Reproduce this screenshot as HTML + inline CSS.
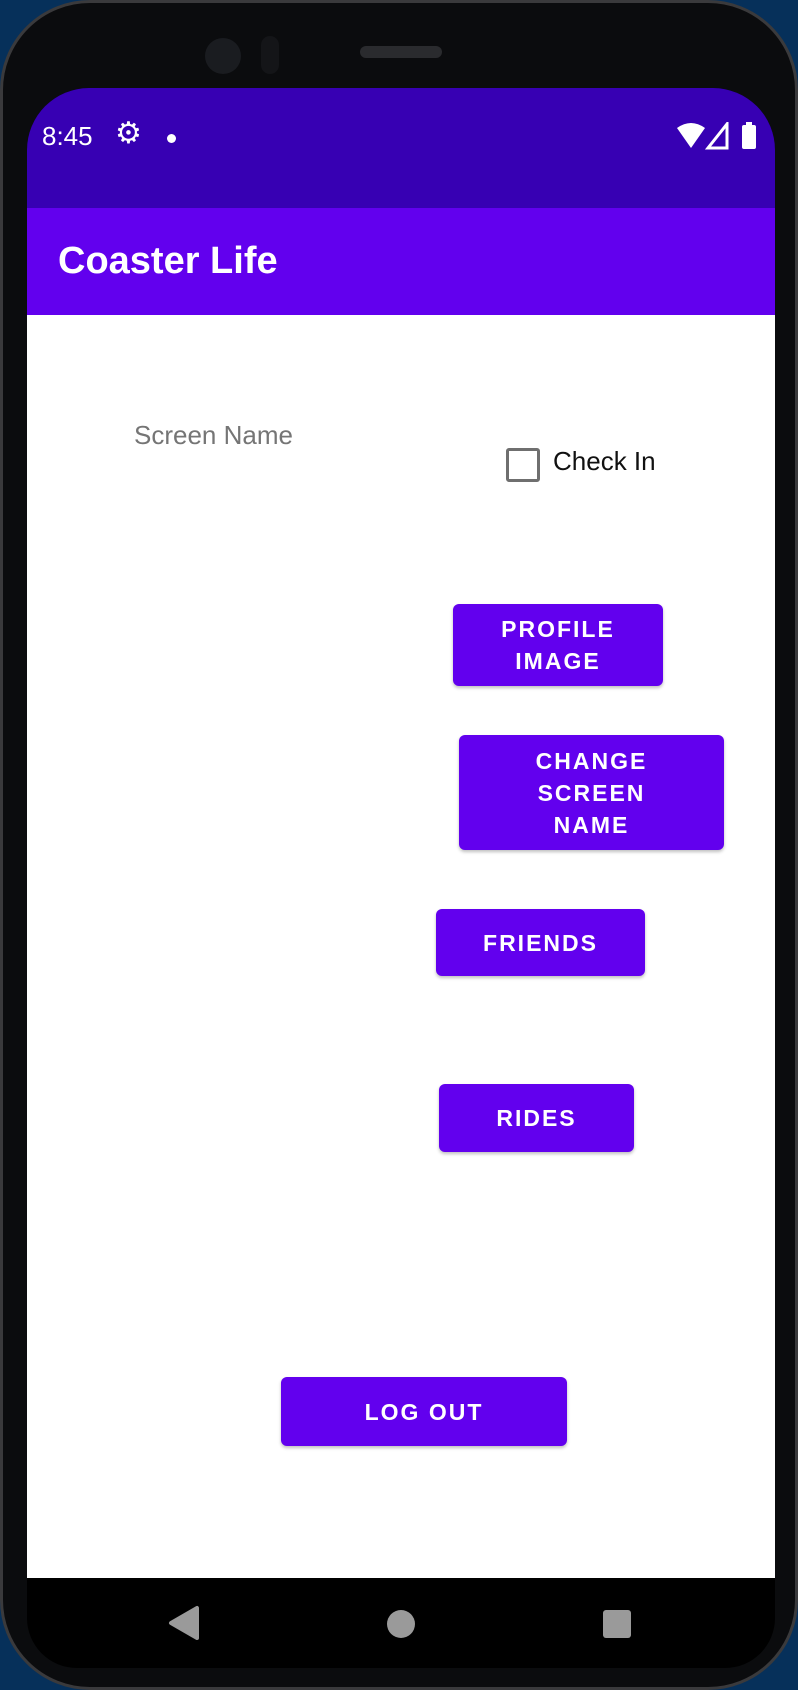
<!DOCTYPE html>
<html><head><style>
body{margin:0;width:798px;height:1679px;background:#06305a;overflow:hidden;font-family:"Liberation Sans",sans-serif;position:relative}
.phone{position:absolute;left:0;top:0;width:798px;height:1690px;background:#0b0c0e;border-radius:90px;border:3px solid #3a3a3c;box-sizing:border-box}
.screen{position:absolute;left:27px;top:88px;width:748px;height:1580px;border-radius:62px 62px 50px 50px;overflow:hidden;background:#000}
.status{position:absolute;left:0;top:0;width:100%;height:120px;background:#3700b3;color:#fff}
.appbar{position:absolute;left:0;top:120px;width:100%;height:107px;background:#6200ee;color:#fff}
.content{position:absolute;left:0;top:227px;width:100%;height:1263px;background:#fff}
.btn{position:absolute;background:#6200ee;color:#fff;border-radius:6px;box-shadow:0 2px 3px rgba(0,0,0,.25);display:flex;align-items:center;justify-content:center;text-align:center;font-size:23px;font-weight:bold;letter-spacing:2px;line-height:32px}
</style></head><body>
<div class="phone"></div>
<div style="position:absolute;left:205px;top:38px;width:36px;height:36px;border-radius:50%;background:#1a1c20"></div>
<div style="position:absolute;left:261px;top:36px;width:18px;height:38px;border-radius:9px;background:#141518"></div>
<div style="position:absolute;left:360px;top:46px;width:82px;height:12px;border-radius:6px;background:#2a2b2e"></div>
<div class="screen">
 <div class="status">
  <div style="position:absolute;left:15px;top:33px;font-size:26px">8:45</div>
  <div style="position:absolute;left:88px;top:28px;font-size:30px">⚙</div>
  <div style="position:absolute;left:140px;top:46px;width:9px;height:9px;border-radius:50%;background:#fff"></div>
  <svg style="position:absolute;left:650px;top:34px" width="90" height="28" viewBox="0 0 90 28">
   <path d="M0 6 Q14 -4 28 6 L14 26 Z" fill="#fff"/>
   <path d="M50 2 L50 26 L31 26 Z" fill="none" stroke="#fff" stroke-width="3"/>
   <rect x="65" y="3" width="14" height="24" rx="2" fill="#fff"/><rect x="69" y="0" width="6" height="4" fill="#fff"/>
  </svg>
 </div>
 <div class="appbar"><div style="position:absolute;left:31px;top:32px;font-size:38px;font-weight:bold">Coaster Life</div></div>
 <div class="content">
  <div style="position:absolute;left:107px;top:105px;font-size:26px;color:#757575">Screen Name</div>
  <div style="position:absolute;left:479px;top:133px;width:28px;height:28px;border:3px solid #6f6f6f;border-radius:3px"></div>
  <div style="position:absolute;left:526px;top:131px;font-size:26px;color:#111">Check In</div>
  <div class="btn" style="left:426px;top:289px;width:210px;height:82px">PROFILE<br>IMAGE</div>
  <div class="btn" style="left:432px;top:420px;width:265px;height:115px">CHANGE<br>SCREEN<br>NAME</div>
  <div class="btn" style="left:409px;top:594px;width:209px;height:67px">FRIENDS</div>
  <div class="btn" style="left:412px;top:769px;width:195px;height:68px">RIDES</div>
  <div class="btn" style="left:254px;top:1062px;width:286px;height:69px">LOG OUT</div>
 </div>
 <svg style="position:absolute;left:0;top:1490px" width="748" height="92">
  <path d="M170 30 L170 60 L144 45 Z" fill="#9a9a9a" stroke="#9a9a9a" stroke-width="4" stroke-linejoin="round"/>
  <ellipse cx="374" cy="46" rx="14" ry="14" fill="#9a9a9a"/>
  <rect x="576" y="32" width="28" height="28" rx="3" fill="#9a9a9a"/>
 </svg>
</div>
</body></html>
